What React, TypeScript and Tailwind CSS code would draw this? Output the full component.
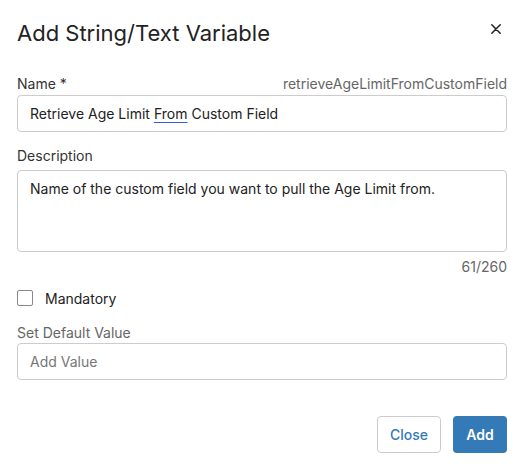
import React from "react";

export default function App() {
  return (
    <div
      className="w-[520px] h-[474px] bg-white pl-[17px] pr-[13px] text-[14px] text-[#222]"
      style={{ fontFamily: "Inter, 'Noto Sans', sans-serif" }}
    >
      {/* Header */}
      <div className="flex items-start justify-between pt-[19px]">
        <h1 className="text-[22px] leading-[28px] font-normal text-[#222]">
          Add String/Text Variable
        </h1>
        <button className="mt-[3px] mr-[4px] w-[14px] h-[14px] flex items-center justify-center text-[#222]">
          <svg width="10" height="10" viewBox="0 0 10 10" fill="none">
            <path d="M0.8 0.8 L9.2 9.2 M9.2 0.8 L0.8 9.2" stroke="currentColor" strokeWidth="1.5" strokeLinecap="round" />
          </svg>
        </button>
      </div>

      {/* Name */}
      <div className="mt-[27px] flex items-center justify-between h-[20px] leading-[20px]">
        <span className="text-[#333]">Name *</span>
        <span className="text-[#666]">retrieveAgeLimitFromCustomField</span>
      </div>
      <div className="mt-[1px] h-[37px] border border-[#ccc] rounded-[4px] flex items-center px-[12px] text-[#222]">
        Retrieve Age Limit{" "}
        <span className="mx-[4px] underline decoration-[#2f5fe0] underline-offset-[3px]">From</span>
        Custom Field
      </div>

      {/* Description */}
      <div className="mt-[14px] h-[20px] leading-[20px] text-[#333]">Description</div>
      <div className="mt-[4px] h-[82px] border border-[#ccc] rounded-[4px] px-[12px] pt-[8px] leading-[20px] text-[#222]">
        Name of the custom field you want to pull the Age Limit from.
      </div>
      <div className="mt-[5px] h-[20px] leading-[20px] text-right text-[#666]">61/260</div>

      {/* Mandatory */}
      <div className="mt-[13px] flex items-center gap-[12px] h-[16px]">
        <div className="w-[16px] h-[16px] border border-[#888] rounded-[2px] bg-white" />
        <span className="text-[#222]">Mandatory</span>
      </div>

      {/* Default value */}
      <div className="mt-[17px] h-[20px] leading-[20px] text-[#666]">Set Default Value</div>
      <div className="h-[37px] border border-[#ccc] rounded-[4px] flex items-center px-[12px] text-[#777]">
        Add Value
      </div>

      {/* Footer */}
      <div className="mt-[36px] flex justify-end gap-[12px]">
        <button className="h-[37px] w-[64px] border border-[#ccc] rounded-[4px] bg-white text-[#337ab7] font-medium">
          Close
        </button>
        <button className="h-[37px] w-[54px] rounded-[4px] bg-[#337ab7] text-white font-semibold">
          Add
        </button>
      </div>
    </div>
  );
}
